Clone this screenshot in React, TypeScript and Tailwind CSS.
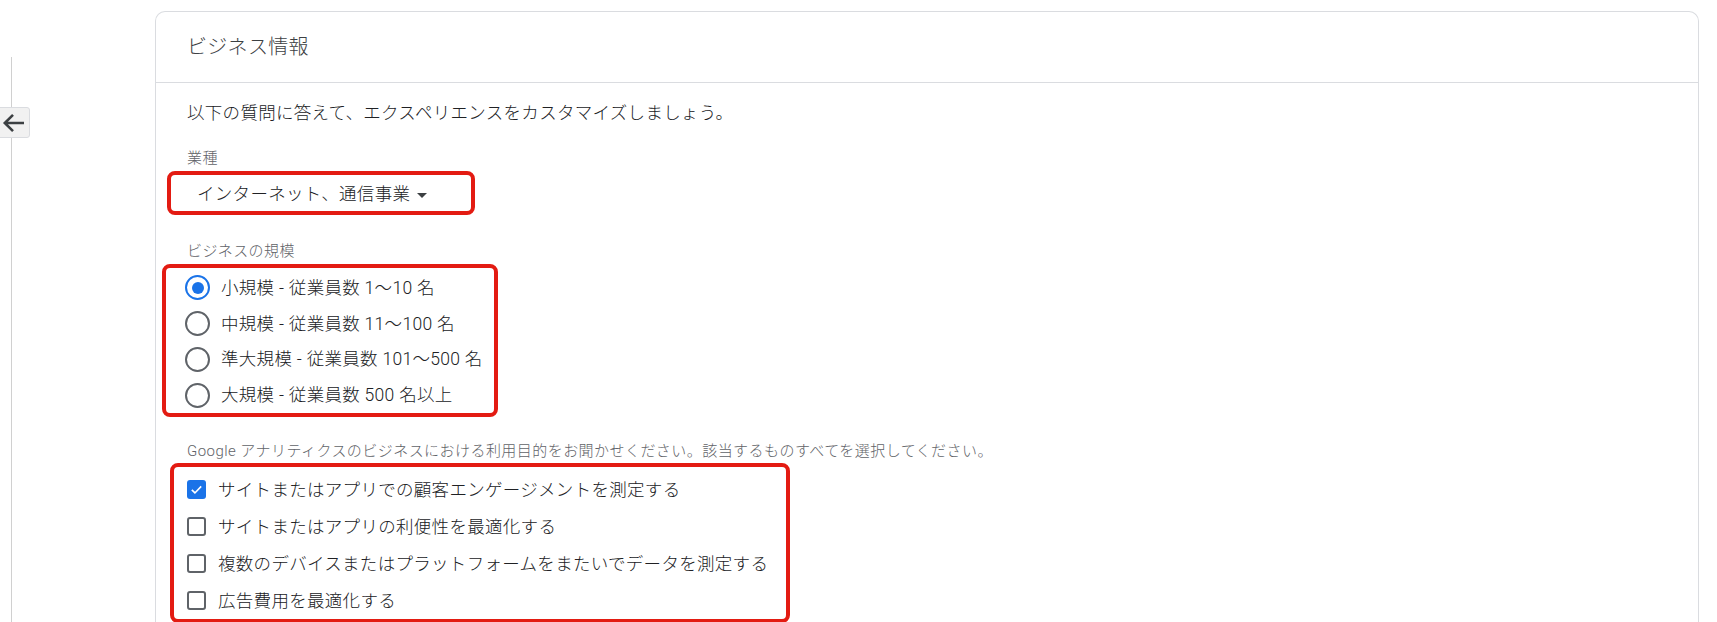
import React from "react";

const FONT = { fontFamily: '"Roboto", "Noto Sans CJK JP", sans-serif' };

function Radio({ checked, label }: { checked?: boolean; label: string }) {
  return (
    <div className="flex h-[36px] items-center">
      <div
        className={`flex h-[25px] w-[25px] items-center justify-center rounded-full border-[2.5px] ${
          checked ? "border-[#1a73e8]" : "border-[#5f6368]"
        }`}
      >
        {checked && <div className="h-[12px] w-[12px] rounded-full bg-[#1a73e8]" />}
      </div>
      <span className="ml-[11px] text-[17.5px] font-light leading-[24px] tracking-[0.3px] text-[#202124]">{label}</span>
    </div>
  );
}

function Check({ checked, label }: { checked?: boolean; label: string }) {
  return (
    <div className="flex h-[37px] items-center">
      {checked ? (
        <div className="flex h-[19px] w-[19px] items-center justify-center rounded-[3px] bg-[#1a73e8]">
          <svg width="15" height="15" viewBox="0 0 24 24" fill="none">
            <path d="M4.5 12.5l5 5 10-10.5" stroke="#fff" strokeWidth="2.6" />
          </svg>
        </div>
      ) : (
        <div className="h-[19px] w-[19px] rounded-[3px] border-[2.5px] border-[#5f6368]" />
      )}
      <span className="ml-[12px] text-[17.5px] font-light leading-[24px] tracking-[0.3px] text-[#202124]">{label}</span>
    </div>
  );
}

export default function App() {
  return (
    <div className="flex h-[622px] w-[1717px] overflow-hidden bg-white" style={FONT}>
      <div className="relative w-[155px] shrink-0">
        <div className="ml-[11px] mt-[57px] h-[565px] border-l border-[#d0d0d0]" />
        <div className="absolute left-[-4px] top-[107px] flex h-[31px] w-[34px] items-center justify-center rounded-r-[3px] border border-[#dadce0] bg-[#f1f1f1] pl-[2px]">
          <svg width="24" height="24" viewBox="0 0 24 24" fill="none">
            <path d="M22 12H3.5M11 3.8L2.8 12 11 20.2" stroke="#3c4043" strokeWidth="2.6" />
          </svg>
        </div>
      </div>
      <div className="mr-[18px] mt-[11px] flex-1 rounded-t-[10px] border border-b-0 border-[#dadce0]">
        <div className="flex h-[71px] items-center border-b border-[#dadce0] pl-[31px] pb-[1px]">
          <span className="text-[20px] font-light leading-[28px] tracking-[0.3px] text-[#3c4043]">ビジネス情報</span>
        </div>
        <div className="flex flex-col pl-[31px] pt-[18px]">
          <div className="text-[17.5px] font-light leading-[24px] tracking-[0.3px] text-[#202124]">
            以下の質問に答えて、エクスペリエンスをカスタマイズしましょう。
          </div>
          <div className="mt-[23px] text-[15px] font-light leading-[20px] tracking-[0.4px] text-[#5f6368]">業種</div>
          <div className="ml-[-20px] mt-[3px] flex h-[44px] w-[308px] items-center rounded-[8px] border-4 border-[#e31b12] pl-[26px] pt-[2px]">
            <span className="text-[17.5px] font-light leading-[24px] tracking-[0.3px] text-[#202124]">インターネット、通信事業</span>
            <svg className="ml-[7px] mt-[3px]" width="10" height="5" viewBox="0 0 10 5">
              <path d="M0 0h10L5 5z" fill="#3c4043" />
            </svg>
          </div>
          <div className="mt-[26px] text-[15px] font-light leading-[20px] tracking-[0.4px] text-[#5f6368]">ビジネスの規模</div>
          <div className="ml-[-25px] mt-[3px] flex h-[153px] w-[336px] flex-col rounded-[8px] border-4 border-[#e31b12] pl-[19px] pt-[2px]">
            <Radio checked label="小規模 - 従業員数 1～10 名" />
            <Radio label="中規模 - 従業員数 11～100 名" />
            <Radio label="準大規模 - 従業員数 101～500 名" />
            <Radio label="大規模 - 従業員数 500 名以上" />
          </div>
          <div className="mt-[24px] text-[15px] font-light leading-[20px] tracking-[0.45px] text-[#5f6368]">
            Google アナリティクスのビジネスにおける利用目的をお聞かせください。該当するものすべてを選択してください。
          </div>
          <div className="ml-[-17px] mt-[2px] flex h-[160px] w-[620px] flex-col rounded-[8px] border-4 border-[#e31b12] pl-[13px] pt-[4px]">
            <Check checked label="サイトまたはアプリでの顧客エンゲージメントを測定する" />
            <Check label="サイトまたはアプリの利便性を最適化する" />
            <Check label="複数のデバイスまたはプラットフォームをまたいでデータを測定する" />
            <Check label="広告費用を最適化する" />
          </div>
        </div>
      </div>
    </div>
  );
}
